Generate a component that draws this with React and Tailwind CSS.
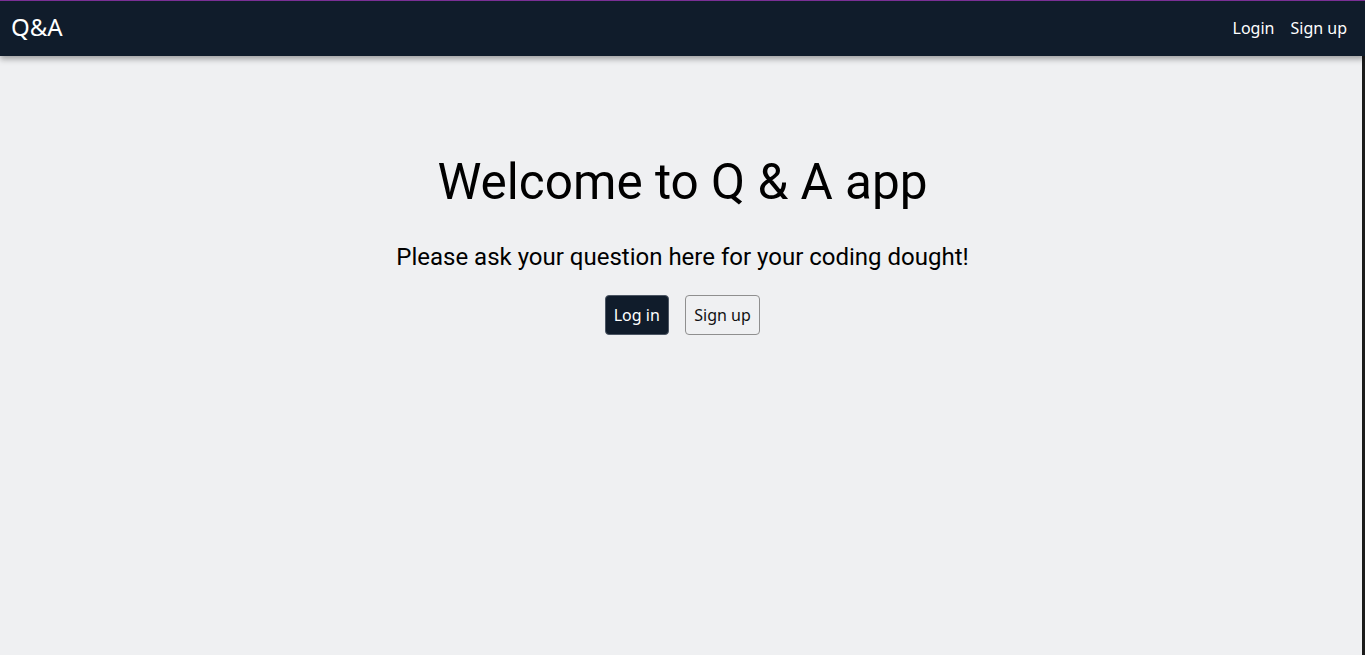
import React from 'react';

const Navbar = () => (
    <nav className="h-14 bg-[#101c2b] border-t border-[#7a2f95] shadow-[0_3px_6px_rgba(0,0,0,0.35)] flex items-center justify-between pl-[11px] pr-[18px] relative z-10">
        <a href="#" className="text-white text-[24px] font-['Noto_Sans',sans-serif] leading-none -mt-[4px]">Q&amp;A</a>
        <div className="flex items-center gap-4 text-white text-base font-['Noto_Sans',sans-serif] -mt-[2px]">
            <a href="#">Login</a>
            <a href="#">Sign up</a>
        </div>
    </nav>
);

export default function App() {
    return (
        <div className="min-h-[655px] bg-[#eff0f2] shadow-[inset_-3px_0_0_#1b1b1b] flex flex-col">
            <Navbar />
            <main className="flex flex-col items-center pt-[98px] font-['Roboto',sans-serif] text-black">
                <h1 className="text-[49.5px] leading-[56px]">Welcome to Q &amp; A app</h1>
                <p className="mt-[33px] text-[24px] leading-7">Please ask your question here for your coding dought!</p>
                <div className="mt-[24px] flex gap-4 font-['Noto_Sans',sans-serif] text-base">
                    <button className="h-10 px-[8px] rounded bg-[#101c2b] text-white border border-[#4b5563]">Log in</button>
                    <button className="h-10 px-[8.5px] rounded bg-transparent text-[#111] border border-[#8f8f8f]">Sign up</button>
                </div>
            </main>
        </div>
    );
}
